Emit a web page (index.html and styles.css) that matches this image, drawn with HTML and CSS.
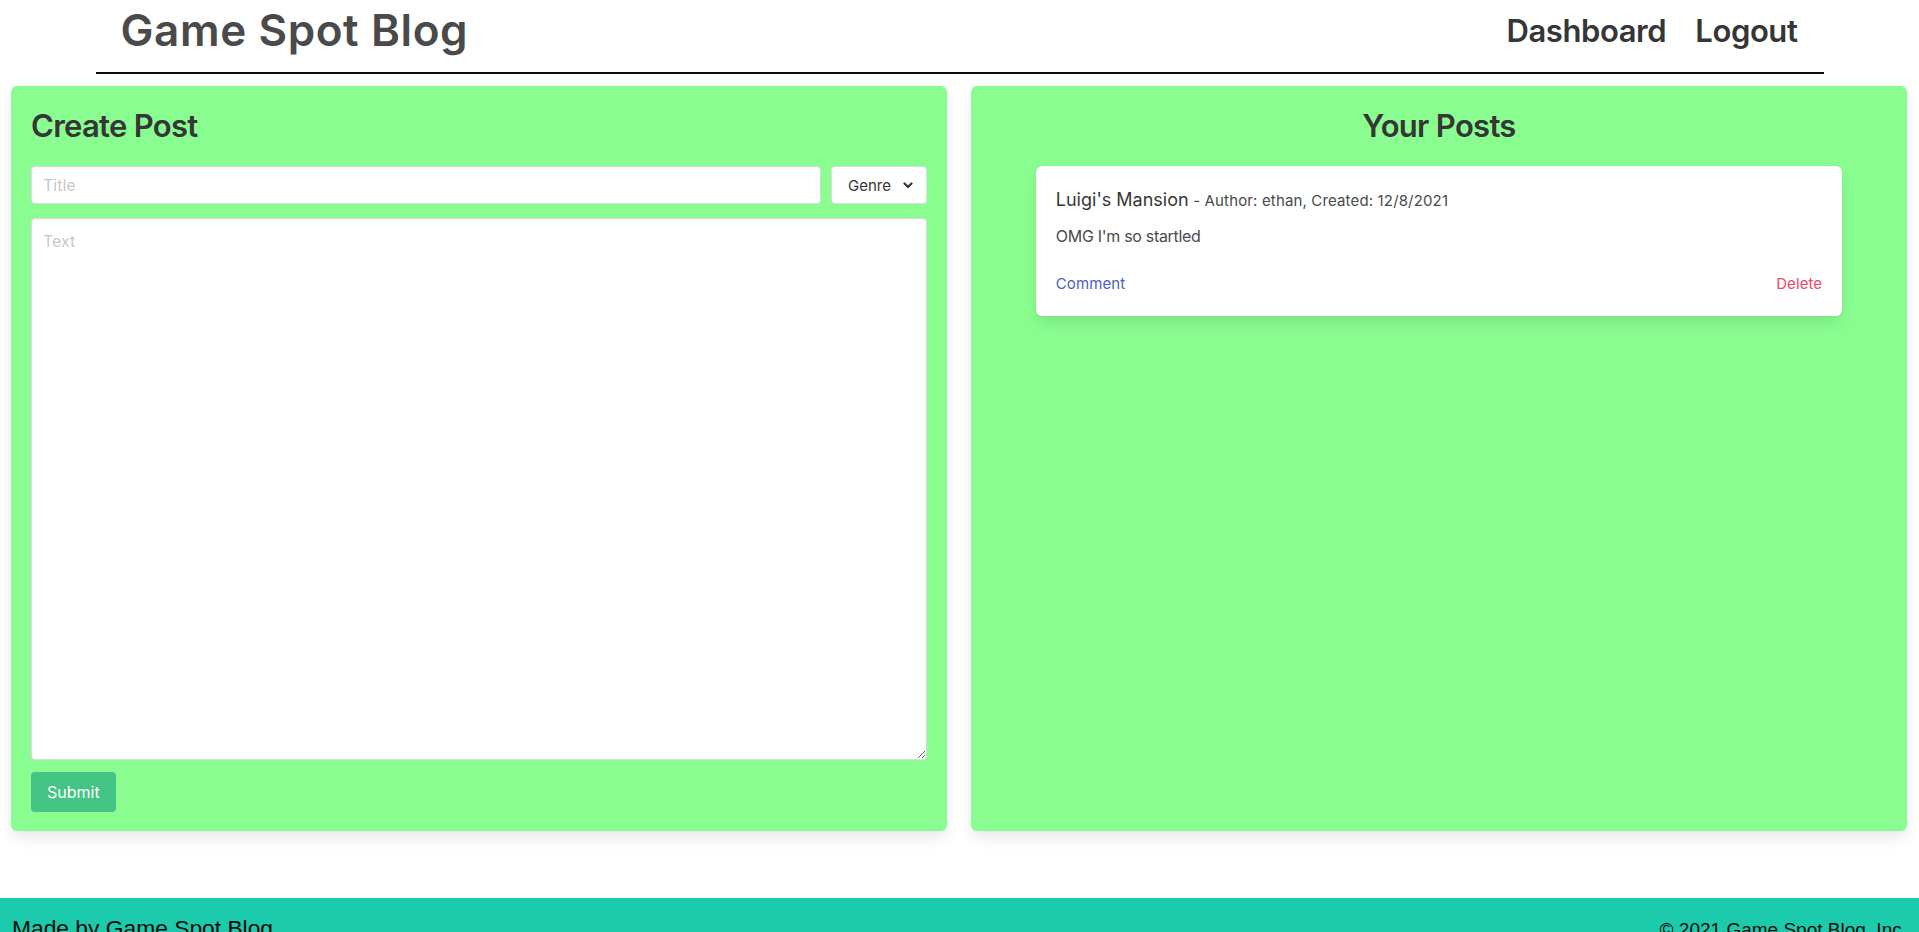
FILE: index.html
```html
<!DOCTYPE html>
<html lang="en">
<head>
<meta charset="utf-8">
<title>Game Spot Blog</title>
<link rel="stylesheet" href="styles.css">
</head>
<body>
<header class="site-header">
  <h1 class="brand">Game Spot Blog</h1>
  <nav class="nav">
    <a class="nav-link" href="#">Dashboard</a>
    <a class="nav-link" href="#">Logout</a>
  </nav>
</header>

<main class="main">
  <section class="panel">
    <h2 class="panel-title">Create Post</h2>
    <form class="post-form">
      <div class="form-row">
        <input class="input title-input" type="text" placeholder="Title">
        <div class="select-wrap">
          <select class="select">
            <option>Genre</option>
          </select>
          <svg class="chevron" width="10" height="7" viewBox="0 0 10 7"><polyline points="1.5,1.5 5,5 8.5,1.5" fill="none" stroke="#363636" stroke-width="2.2" stroke-linecap="round" stroke-linejoin="round"/></svg>
        </div>
      </div>
      <textarea class="textarea" placeholder="Text"></textarea>
      <button class="btn-submit" type="button">Submit</button>
    </form>
  </section>

  <section class="panel">
    <h2 class="panel-title centered">Your Posts</h2>
    <article class="post-card">
      <div class="post-head"><span class="post-title">Luigi's Mansion</span> <span class="post-meta">- Author: ethan, Created: 12/8/2021</span></div>
      <p class="post-body">OMG I'm so startled</p>
      <div class="post-actions">
        <a class="link-comment" href="#">Comment</a>
        <a class="link-delete" href="#">Delete</a>
      </div>
    </article>
  </section>
</main>

<footer class="site-footer">
  <span class="footer-left">Made by Game Spot Blog</span>
  <span class="footer-right">© 2021 Game Spot Blog, Inc.</span>
</footer>
</body>
</html>
```

FILE: styles.css
```css
* { box-sizing: border-box; }

html, body {
  margin: 0;
  padding: 0;
  background: #fff;
}

body {
  font-family: Inter, "Noto Sans", sans-serif;
  font-size: 16px;
  color: #4a4a4a;
  line-height: 1.5;
}

a { text-decoration: none; }

.site-header {
  width: 1728px;
  margin: 0 auto;
  height: 74px;
  padding: 6px 26px 0 25px;
  border-bottom: 2px solid #0a0a0a;
  display: flex;
  justify-content: space-between;
  align-items: flex-start;
}

.brand {
  margin: 0;
  font-size: 44px;
  line-height: 48px;
  font-weight: 600;
  color: #4a4a4a;
  letter-spacing: 0.6px;
}

.nav {
  display: flex;
  gap: 29px;
  padding-top: 6px;
}

.nav-link {
  font-size: 31px;
  line-height: 37px;
  font-weight: 600;
  color: #363636;
  letter-spacing: -0.4px;
}

.main {
  display: flex;
  gap: 24px;
  padding: 0 12px 0 11px;
  margin-top: 12px;
  align-items: stretch;
}

.panel {
  flex: 1 1 0;
  background: #8afd90;
  border-radius: 6px;
  padding: 20px 20px 19px;
  box-shadow: 0 8px 16px -2px rgba(10, 10, 10, 0.1), 0 0 0 1px rgba(10, 10, 10, 0.02);
}

.panel-title {
  margin: 0 0 24px;
  padding-top: 2px;
  height: 36px;
  font-size: 31px;
  line-height: 36px;
  font-weight: 600;
  color: #363636;
  letter-spacing: -0.7px;
}

.panel-title.centered { text-align: center; }

.post-form {
  display: flex;
  flex-direction: column;
  align-items: flex-start;
}

.form-row {
  display: flex;
  gap: 10px;
  width: 100%;
  margin-bottom: 14px;
}

.input,
.select,
.textarea {
  font-family: Inter, "Noto Sans", sans-serif;
  font-size: 16px;
  color: #363636;
  background: #fff;
  border: 1px solid #dbdbdb;
  border-radius: 4px;
  box-shadow: inset 0 1px 2px rgba(10, 10, 10, 0.05);
  outline: none;
}

.input::placeholder,
.textarea::placeholder {
  color: rgba(54, 54, 54, 0.3);
}

.title-input {
  flex: 1 1 auto;
  height: 38px;
  padding: 0 11px;
}

.select-wrap {
  position: relative;
  width: 96px;
  flex: 0 0 96px;
}

.select {
  -webkit-appearance: none;
  appearance: none;
  width: 100%;
  height: 38px;
  padding: 0 0 0 16px;
  font-size: 15px;
  box-shadow: none;
}

.chevron {
  position: absolute;
  right: 14px;
  top: 16px;
  pointer-events: none;
}

.textarea {
  display: block;
  width: 100%;
  height: 542px;
  padding: 12px 11px 10px;
  resize: vertical;
  margin-bottom: 12px;
}

.btn-submit {
  height: 40px;
  padding: 0 16px;
  font-family: Inter, "Noto Sans", sans-serif;
  font-size: 16px;
  color: #fff;
  background: #43c485;
  border: none;
  border-radius: 4px;
}

.post-card {
  width: 90%;
  margin: 0 auto;
  background: #fff;
  border-radius: 6px;
  padding: 20px 20px 20px;
  box-shadow: 0 8px 16px -2px rgba(10, 10, 10, 0.1), 0 0 0 1px rgba(10, 10, 10, 0.02);
  color: #4a4a4a;
}

.post-head {
  line-height: 27px;
}

.post-title {
  font-size: 18px;
  color: #363636;
}

.post-meta {
  font-size: 15px;
  letter-spacing: 0.15px;
}

.post-body {
  margin: 10px 0 0;
  font-size: 16px;
  line-height: 24px;
  color: #4a4a4a;
  letter-spacing: -0.3px;
}

.post-actions {
  display: flex;
  justify-content: space-between;
  margin-top: 24px;
  font-size: 15px;
  line-height: 24px;
  letter-spacing: 0.1px;
}

.link-comment { color: #485fc7; }
.link-delete { color: #f14668; }

.site-footer {
  margin-top: 67px;
  background: #1ccbab;
  padding: 14px 12px 20px 12px;
  display: flex;
  justify-content: space-between;
  align-items: baseline;
  font-family: "Liberation Sans", Arial, sans-serif;
  line-height: 33px;
  color: #0a0a0a;
}

.footer-left { font-size: 22.8px; }
.footer-right { font-size: 19px; }
```
